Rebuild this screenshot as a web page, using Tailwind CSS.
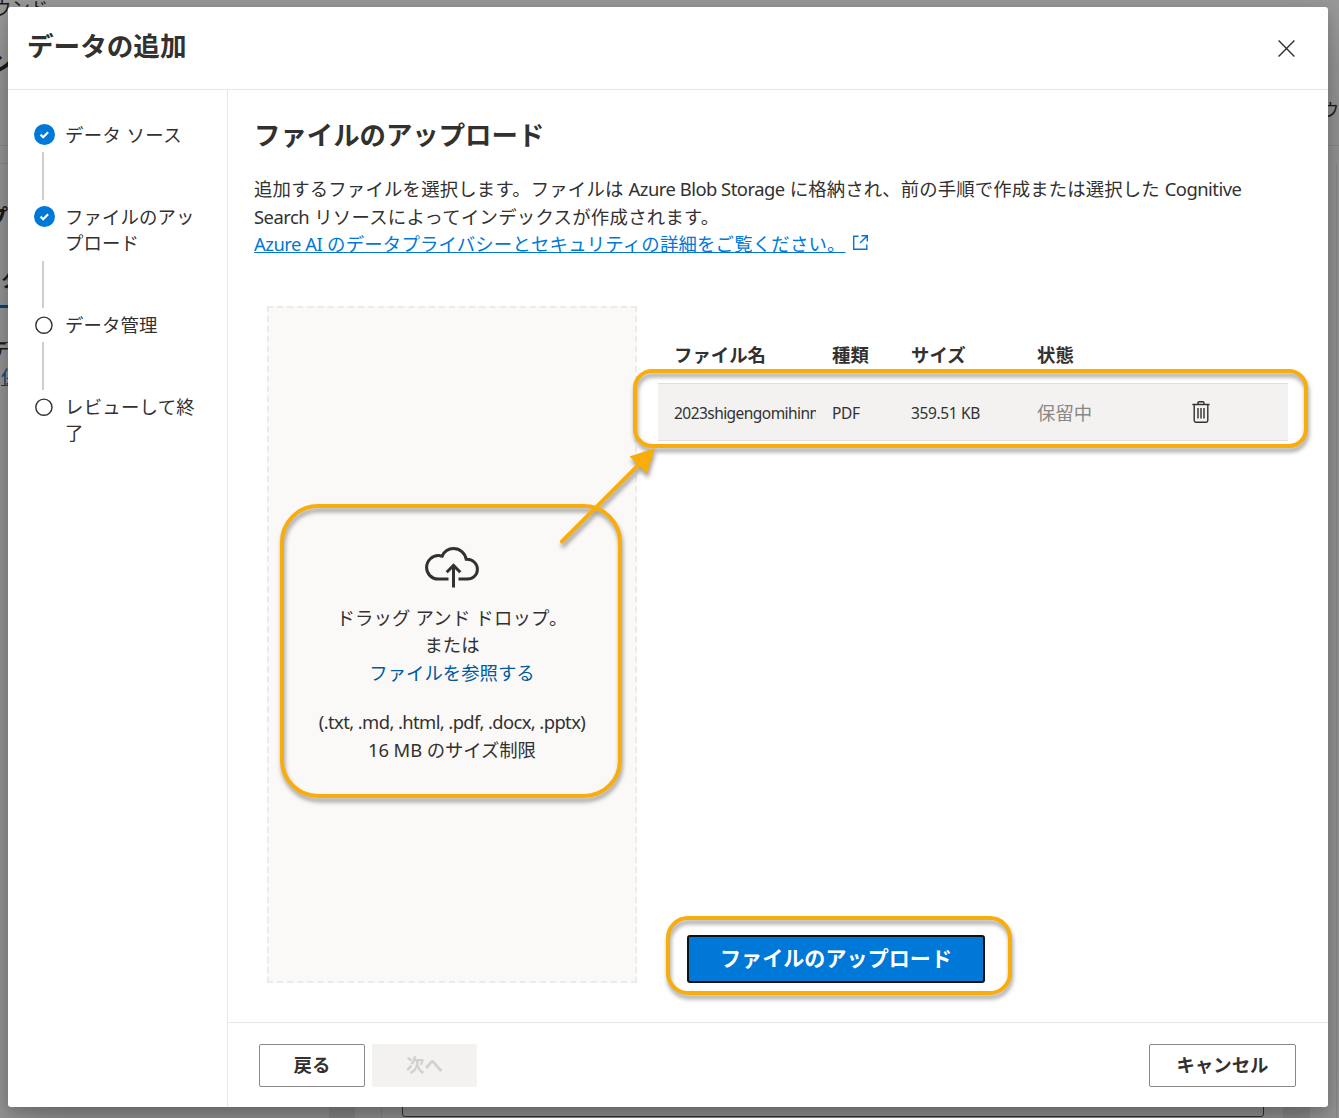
<!DOCTYPE html>
<html lang="ja">
<head>
<meta charset="utf-8">
<title>データの追加</title>
<script src="https://cdn.jsdelivr.net/npm/@tailwindcss/browser@4"></script>
</head>
<body class="relative w-[1339px] h-[1118px] overflow-hidden bg-[#999999] font-['Noto_Sans','Noto_Sans_CJK_JP',sans-serif] text-[18.4px] text-[#323130]">

<!-- dimmed page behind the dialog -->
<div class="absolute inset-0 overflow-hidden text-[#1c1b1a] whitespace-nowrap" aria-hidden="true">
  <div class="absolute left-0 top-[145px] w-full h-px bg-[#8c8c8c]"></div>
  <div class="absolute left-0 top-[163px] w-[8px] h-px bg-[#8c8c8c]"></div>
  <div class="absolute left-[1336px] top-[163px] w-px h-[955px] bg-[#8c8c8c]"></div>
  <div class="absolute left-[-7px] top-[-5px] leading-[26px]">ウンド</div>
  <div class="absolute left-[-11px] top-[42px] text-[26px] font-bold leading-[40px]">ン</div>
  <div class="absolute left-[-14px] top-[202px] text-[22px] font-bold leading-[28px]">プ</div>
  <div class="absolute left-[1px] top-[267px] font-bold leading-[26px]">タ</div>
  <div class="absolute left-0 top-[305px] w-[10px] h-[3px] bg-[#004880]"></div>
  <div class="absolute left-0 top-[342px] w-[10px] h-px bg-[#333]"></div>
  <div class="absolute left-[-9px] top-[337px] leading-[26px]">テ</div>
  <div class="absolute left-px top-[364px] leading-[26px] text-[#004880] underline">保</div>
  <div class="absolute left-[1322px] top-[97px] leading-[26px] text-[17px]">ウ</div>
  <div class="absolute left-[329px] top-[1090px] w-[26px] h-[28px] bg-[#8e8e8e]"></div>
  <div class="absolute left-[381px] top-[1090px] w-px h-[28px] bg-[#8c8c8c]"></div>
  <div class="absolute left-[402px] top-[1080px] w-[862px] h-[37px] rounded-[3px] border border-[#333]"></div>
  <div class="absolute left-[1283px] top-[1090px] w-[27px] h-[28px] bg-[#8e8e8e]"></div>
</div>

<div class="absolute left-[8px] top-[7px] w-[1320px] h-[1100px] bg-white rounded-[3px] shadow-[0_26px_58px_rgba(0,0,0,0.22),0_5px_14px_rgba(0,0,0,0.18)] flex flex-col whitespace-nowrap" role="dialog">
  <header class="h-[83px] shrink-0 border-b border-[#e8e7e6] flex justify-between pl-[19px] pr-[33px] pt-[20px]">
    <h1 class="text-[26.6px] leading-[38px] font-bold">データの追加</h1>
    <svg class="mt-[13px] w-[17px] h-[17px]" viewBox="0 0 17 17" fill="none" stroke="#323130" stroke-width="1.4"><path d="M.6.6l15.8 15.8M16.4.6L.6 16.4"/></svg>
  </header>

  <div class="flex flex-1 min-h-0">
    <nav class="w-[220px] shrink-0 border-r border-[#e8e7e6] pt-[32px] pl-[26px] leading-[26px] tracking-[0.1px]">
      <div class="flex gap-[10px]">
        <svg class="mt-[2px] w-[21px] h-[21px]" viewBox="0 0 21 21"><circle cx="10.5" cy="10.5" r="10.5" fill="#0078d7"/><path d="M6.6 10.6l2.6 2.6 4.9-5" fill="none" stroke="#fff" stroke-width="2.2"/></svg>
        <span class="tracking-[0.4px]">データ ソース</span>
      </div>
      <div class="ml-[8px] mt-[4px] mb-[4px] h-[48px] w-[2px] bg-[#d0cecd]"></div>
      <div class="flex gap-[10px]">
        <svg class="mt-[2px] w-[21px] h-[21px]" viewBox="0 0 21 21"><circle cx="10.5" cy="10.5" r="10.5" fill="#0078d7"/><path d="M6.6 10.6l2.6 2.6 4.9-5" fill="none" stroke="#fff" stroke-width="2.2"/></svg>
        <span>ファイルのアッ<br>プロード</span>
      </div>
      <div class="ml-[8px] mt-[5px] mb-[4px] h-[47px] w-[2px] bg-[#d0cecd]"></div>
      <div class="flex gap-[10px]">
        <svg class="mt-[3px] w-[21px] h-[21px]" viewBox="0 0 21 21"><circle cx="9.9" cy="10.2" r="8.1" fill="none" stroke="#323130" stroke-width="1.4"/></svg>
        <span>データ管理</span>
      </div>
      <div class="ml-[8px] mt-[4px] mb-[4px] h-[48px] w-[2px] bg-[#d0cecd]"></div>
      <div class="flex gap-[10px]">
        <svg class="mt-[3px] w-[21px] h-[21px]" viewBox="0 0 21 21"><circle cx="9.9" cy="10.2" r="8.1" fill="none" stroke="#323130" stroke-width="1.4"/></svg>
        <span class="tracking-[0.25px]">レビューして終<br>了</span>
      </div>
    </nav>

    <main class="flex-1 min-w-0 flex flex-col">
      <section class="flex-1 min-h-0 pl-[26px] pt-[26px]">
        <h2 class="text-[26.4px] leading-[38px] font-bold">ファイルのアップロード</h2>
        <p class="mt-[21px] leading-[27.6px] tracking-[0.18px]">追加するファイルを選択します。ファイルは <span class="tracking-[-0.5px]">Azure Blob Storage</span> <span class="tracking-[0.1px]">に格納され、前の手順で作成または選択した</span> <span class="tracking-[-0.5px]">Cognitive</span><br><span class="tracking-[-0.5px]">Search</span> <span class="tracking-[0.25px]">リソースによってインデックスが作成されます。</span><br><a class="text-[#0078d7] underline"><span class="tracking-[-0.5px]">Azure AI</span> のデータプライバシーとセキュリティの詳細をご覧ください。</a><svg class="inline-block ml-[7px] mt-[-8px] w-[15px] h-[15px]" viewBox="0 0 15 15" fill="none" stroke="#0078d7" stroke-width="1.4"><path d="M5.5 1.2H.7v13.1h13.1V9.5M8.5.7h5.8v5.8M14.3.7L7 8"/></svg></p>

        <div class="mt-[48px] ml-[13px] flex">
          <div class="w-[370px] h-[677px] shrink-0 border-2 border-dashed border-[#edebe9] bg-[#faf9f8] flex flex-col items-center text-center pt-[239px] leading-[27.6px]">
            <svg class="w-[54px] h-[41px]" viewBox="0 0 54 41" fill="none" stroke="#323130" stroke-width="3"><path d="M23.5 32H13.2C6.5 32 1.6 26.700 1.600 20.500C1.600 13.500 7.500 8.200 14 8.600L17.200 9.200C19.200 4.600 23.500 1.600 28.500 1.600C35 1.600 40 6 41.200 12.300C47.500 12 52.400 16.500 52.400 22.200C52.400 27.800 48 32 42.500 32H33.500"/><path d="M28.500 40.500V19M21.700 25.200L28.500 18.400L35.300 25.200"/></svg>
            <p class="mt-[16px] tracking-[0.15px]">ドラッグ アンド ドロップ。</p>
            <p>または</p>
            <a class="text-[#005a9e]">ファイルを参照する</a>
            <p class="mt-[21px] tracking-[-0.6px]">(.txt, .md, .html, .pdf, .docx, .pptx)</p>
            <p class="mt-px tracking-[-0.1px]">16 MB のサイズ制限</p>
          </div>

          <div class="ml-[21px] w-[630px] flex flex-col">
            <div class="mt-[34px] h-[43px] pl-[16px] grid grid-cols-[158px_79px_126px_155px_1fr] font-bold leading-[30px]">
              <span>ファイル名</span><span>種類</span><span>サイズ</span><span>状態</span>
            </div>
            <div class="h-[58px] pl-[16px] border-y border-[#e1dfdd] bg-[#f3f2f1] grid grid-cols-[158px_79px_126px_155px_1fr] items-center text-[15.5px]">
              <span class="w-[142px] overflow-hidden pt-[4px] tracking-[-0.55px]">2023shigengomihinm</span><span class="pt-[4px] tracking-[-0.4px]">PDF</span><span class="pt-[4px] tracking-[-0.35px]">359.51 KB</span><span class="pt-[3px] text-[18.4px] text-[#8a8886]">保留中</span>
              <svg class="mt-px w-[18px] h-[22px]" viewBox="0 0 18 22" fill="none" stroke="#323130" stroke-width="1.4"><path d="M.4 3.500H17.600M6 3.500V2Q6 .8 7.200 .8H10.800Q12 .8 12 2V3.500M2.200 3.500V19.500Q2.200 21.200 3.900 21.200H14.100Q15.800 21.200 15.800 19.500V3.500M6 7V17.500M9 7V17.500M12 7V17.500"/></svg>
            </div>
            <button class="mt-[494px] ml-[29px] w-[298px] h-[48px] rounded-[3px] border-2 border-[#111] bg-[#0078d7] text-white text-[21px] font-bold leading-[42px] pb-[2px] tracking-[0.1px]">ファイルのアップロード</button>
          </div>
        </div>
      </section>

      <footer class="h-[85px] shrink-0 border-t border-[#e8e7e6] pl-[31px] pr-[32px] pt-[21px] flex gap-[7px] font-bold">
        <button class="w-[106px] h-[43px] pb-[2px] rounded-[2px] border border-[#8a8886]">戻る</button>
        <button class="w-[105px] h-[43px] pb-[2px] rounded-[2px] bg-[#f3f2f1] text-[#d2d0ce]">次へ</button>
        <button class="ml-auto w-[147px] h-[43px] pb-[2px] rounded-[2px] border border-[#8a8886]">キャンセル</button>
      </footer>
    </main>
  </div>
</div>

<!-- highlight callouts laid over the dialog -->
<svg class="absolute inset-0 w-[1339px] h-[1118px] drop-shadow-[1px_4px_2px_rgba(0,0,0,0.38)]" viewBox="0 0 1339 1118" fill="none" stroke="#f9ad0c" stroke-width="4">
  <rect x="635" y="371" width="671" height="75" rx="17"/>
  <rect x="282" y="506" width="338" height="290" rx="36"/>
  <rect x="668" y="918" width="342" height="75" rx="20"/>
  <path d="M562 541.500L642 461.500" stroke-linecap="round"/>
  <path d="M655 448L629.500 456.500L647 474Z" fill="#f9ad0c" stroke="none"/>
</svg>
</body>
</html>
